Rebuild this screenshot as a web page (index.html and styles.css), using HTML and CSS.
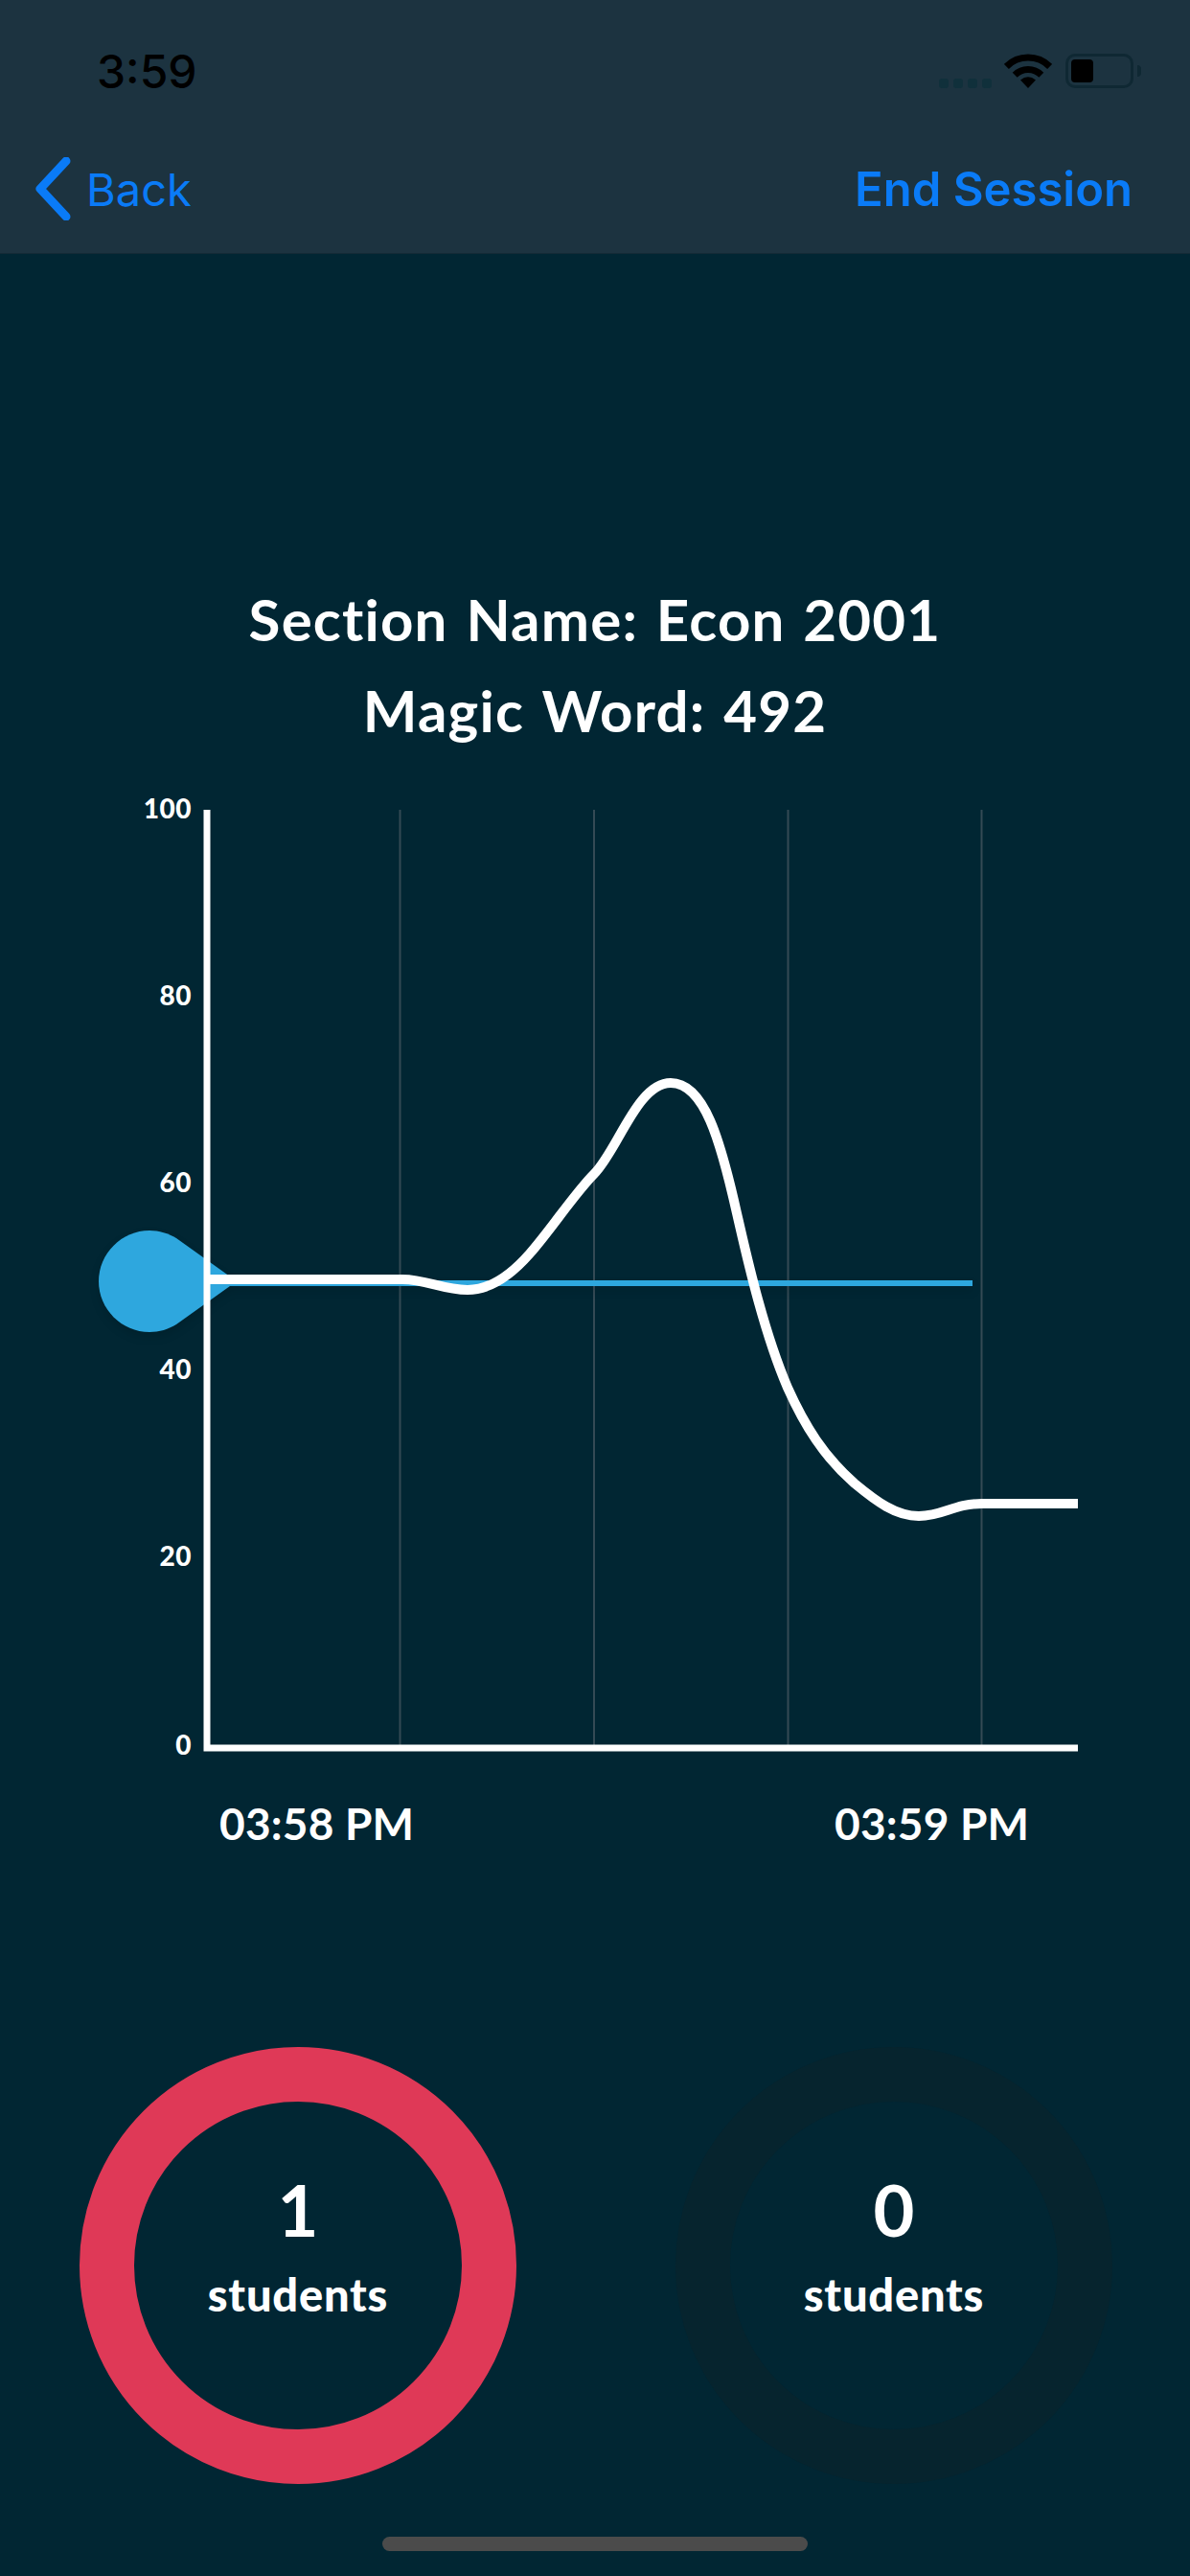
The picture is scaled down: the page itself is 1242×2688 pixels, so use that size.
FILE: index.html
```html
<!DOCTYPE html>
<html lang="en">
<head>
<meta charset="utf-8">
<title>Session</title>
<link rel="stylesheet" href="styles.css">
</head>
<body>
<header class="nav">
  <div class="status">
    <span class="time">3:59</span>
    <div class="status-icons">
      <div class="signal"><i></i><i></i><i></i><i></i></div>
      <svg class="wifi" viewBox="0 0 50 36"><path class="wifi-arc" d="M2.4 13.4A32 32 0 0 1 47.6 13.4"/><path class="wifi-arc" d="M11.2 22.2A19.5 19.5 0 0 1 38.8 22.2"/><path d="M25 36L17 27.5Q25 21 33 27.5Z"/></svg>
      <div class="battery"><div class="battery-level"></div></div>
      <div class="battery-nub"></div>
    </div>
  </div>
  <div class="actions">
    <a class="back"><svg class="chevron" viewBox="0 0 40 66"><path d="M33 4L6 33L33 62"/></svg><span>Back</span></a>
    <a class="end">End Session</a>
  </div>
</header>
<main>
  <section class="titles">
    <h1>Section Name: Econ 2001</h1>
    <h1>Magic Word: 492</h1>
  </section>
  <svg class="chart" viewBox="0 800 1242 1140">
    <g class="grid">
      <path d="M417.5 845V1824"/><path d="M620 845V1824"/><path d="M822.5 845V1824"/><path d="M1024.5 845V1824"/>
    </g>
    <g class="marker">
      <path class="baseline" d="M216 1339H1015"/>
      <path class="drop" d="M156 1284C166 1284 176 1287 184 1292L247 1337L184 1382C176 1387 166 1390 156 1390C127 1390 103 1366 103 1337C103 1308 127 1284 156 1284Z"/>
    </g>
    <path class="curve" d="M216 1335H420C445 1335 462 1346 488 1346C510 1346 532 1332 553 1308C575 1283 600 1245 620 1225C645 1200 665 1130 700 1130C735 1130 752 1190 769 1266C777 1300 795 1385 822 1448C840 1488 860 1520 892 1548C915 1567 935 1582 959 1582C985 1582 995 1569 1025 1569H1125"/>
    <path class="axis" d="M216 845V1824H1125"/>
    <g class="y-labels">
      <text x="200" y="854">100</text>
      <text x="200" y="1049">80</text>
      <text x="200" y="1244">60</text>
      <text x="200" y="1439">40</text>
      <text x="200" y="1634">20</text>
      <text x="200" y="1831">0</text>
    </g>
    <g class="x-labels">
      <text x="229" y="1920">03:58 PM</text>
      <text x="871" y="1920">03:59 PM</text>
    </g>
  </svg>
  <section class="rings">
    <div class="ring ring-active"><span class="ring-count">1</span><span class="ring-label">students</span></div>
    <div class="ring ring-empty"><span class="ring-count">0</span><span class="ring-label">students</span></div>
  </section>
  <div class="home-bar"></div>
</main>
</body>
</html>
```
FILE: styles.css
```css
* { box-sizing: border-box; }
html, body { margin: 0; padding: 0; }
body {
  width: 1242px;
  height: 2688px;
  overflow: hidden;
  background: #012633;
  color: #fff;
  font-family: "Lato", sans-serif;
}
.nav {
  height: 265px;
  background: #1c3340;
  border-bottom: 1px solid #142a36;
  padding-top: 50px;
}
.status {
  display: flex;
  justify-content: space-between;
  align-items: flex-start;
  height: 50px;
  padding: 0 51px 0 101px;
}
.time {
  font-family: "Inter", sans-serif;
  font-weight: 500;
  font-size: 48px;
  line-height: 50px;
  color: #000;
}
.status-icons {
  display: flex;
  align-items: flex-end;
  margin-top: 6px;
}
.signal { display: flex; gap: 5px; margin-right: 13px; padding-bottom: 0; }
.signal i {
  display: block;
  width: 10px;
  height: 10px;
  border-radius: 3px;
  background: #10303b;
}
.wifi { width: 50px; height: 36px; display: block; margin-right: 14px; }
.wifi path { fill: #000; }
.wifi .wifi-arc { fill: none; stroke: #000; stroke-width: 7; }
.battery {
  width: 71px;
  height: 36px;
  border: 3px solid #0f2833;
  border-radius: 10px;
  padding: 3px;
}
.battery-level { width: 23px; height: 24px; background: #000; border-radius: 4px; }
.battery-nub {
  width: 4px;
  height: 12px;
  margin: 0 0 12px 4px;
  background: #0f2833;
  border-radius: 0 4px 4px 0;
}
.actions {
  display: flex;
  justify-content: space-between;
  align-items: center;
  margin-top: 62px;
  padding: 0 60px 0 36px;
  height: 70px;
  color: #0a7bf7;
  font-family: "Inter", sans-serif;
  font-size: 47px;
}
.back { display: flex; align-items: center; gap: 14px; }
.chevron { width: 40px; height: 66px; display: block; }
.chevron path { fill: none; stroke: #0a7bf7; stroke-width: 9; stroke-linecap: round; stroke-linejoin: round; }
.end { font-weight: 600; font-size: 49px; }
.titles { padding-top: 334px; text-align: center; }
h1 {
  margin: 0;
  font-size: 60px;
  line-height: 95px;
  font-weight: 700;
  letter-spacing: 1.2px;
  word-spacing: 3px;
}
.chart { display: block; width: 1242px; height: 1140px; margin-top: 11px; }
.grid path { stroke: #344a55; stroke-width: 2; fill: none; }
.marker { filter: drop-shadow(0 5px 5px rgba(0, 0, 0, 0.12)); }
.baseline { stroke: #2ea7de; stroke-width: 6; fill: none; }
.drop { fill: #2ea7de; }
.curve { stroke: #fff; stroke-width: 10; fill: none; }
.axis { stroke: #fff; stroke-width: 7; fill: none; }
.y-labels text { fill: #fff; font-size: 28px; font-weight: 900; text-anchor: end; letter-spacing: 0.5px; }
.x-labels text { fill: #fff; font-size: 46px; font-weight: 700; letter-spacing: 0.2px; }
.rings {
  display: flex;
  gap: 166px;
  padding-left: 83px;
  margin-top: 196px;
}
.ring {
  width: 456px;
  height: 456px;
  border: 57px solid;
  border-radius: 50%;
  display: flex;
  flex-direction: column;
  align-items: center;
  padding-top: 68px;
}
.ring-active { border-color: #df3957; }
.ring-empty { border-color: #06242e; }
.ring-count { font-size: 74px; line-height: 90px; font-weight: 700; }
.ring-label { font-size: 47px; line-height: 60px; font-weight: 900; margin-top: 13px; letter-spacing: 0.8px; }
.home-bar {
  width: 444px;
  height: 15px;
  margin: 55px auto 0;
  border-radius: 8px;
  background: #4b4b4b;
}
```
